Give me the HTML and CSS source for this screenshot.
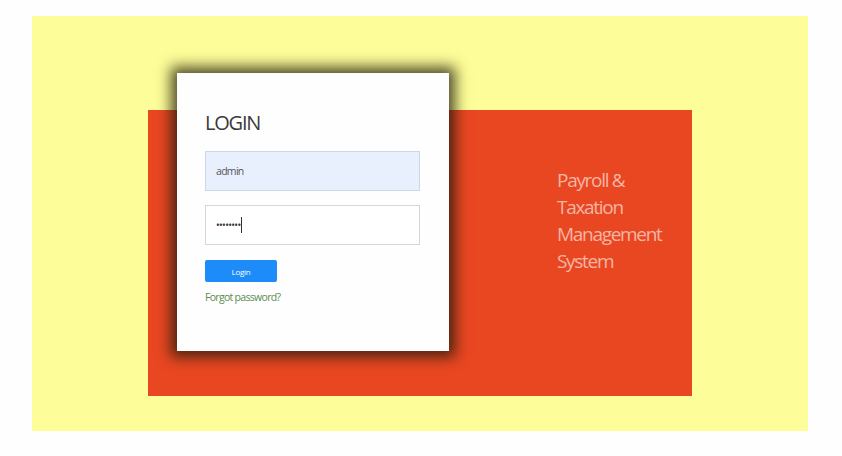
FILE: index.html
```html
<!DOCTYPE html>
<html lang="en">
<head>
<meta charset="utf-8">
<title>Login</title>
<link rel="stylesheet" href="styles.css">
</head>
<body>
<div class="frame">
  <div class="panel">
    <div class="card">
      <h1 class="title">LOGIN</h1>
      <div class="field filled">admin</div>
      <div class="field"><span class="dots">••••••••</span><span class="caret"></span></div>
      <button class="btn">Login</button>
      <a class="forgot" href="#">Forgot password?</a>
    </div>
    <div class="brand">
      <p>Payroll &amp;</p>
      <p>Taxation</p>
      <p>Management</p>
      <p>System</p>
    </div>
  </div>
</div>
</body>
</html>
```
FILE: styles.css
```css
html, body {
  margin: 0;
  padding: 0;
  background: #fefefe;
}
body {
  font-family: "Open Sans", "Noto Sans", sans-serif;
  padding: 16px 34px 25px 32px;
}
.frame {
  width: 776px;
  height: 415px;
  background: #fdfd99;
  padding: 94px 0 0 116px;
  box-sizing: border-box;
}
.panel {
  width: 544px;
  height: 286px;
  background: #e94722;
  display: flex;
  padding-left: 29px;
  box-sizing: border-box;
}
.card {
  width: 272px;
  height: 278px;
  margin-top: -37px;
  background: #fefefe;
  box-shadow: 0 0 13px 6px rgba(30, 25, 10, 0.78);
  box-sizing: border-box;
  padding: 37px 29px 0 28px;
  display: flex;
  flex-direction: column;
  align-items: flex-start;
}
.title {
  margin: 0;
  font-weight: 400;
  font-size: 20px;
  line-height: 26px;
  color: #3a3a3a;
  letter-spacing: -1.2px;
}
.field {
  width: 215px;
  height: 40px;
  box-sizing: border-box;
  border: 1px solid #d6d6d6;
  background: #fff;
  display: flex;
  align-items: center;
  padding-left: 10px;
  font-size: 10.5px;
  letter-spacing: -0.7px;
  color: #555;
  margin-top: 14px;
}
.field.filled {
  margin-top: 15px;
  background: #e8f0fe;
  border-color: #cfd7e4;
}
.dots {
  font-size: 10px;
  letter-spacing: -0.7px;
  color: #333;
}
.caret {
  display: inline-block;
  width: 1px;
  height: 16px;
  background: #333;
  margin-left: 1px;
}
.btn {
  margin-top: 15px;
  width: 72px;
  height: 22px;
  border: none;
  border-radius: 2px;
  background: #1d8cf8;
  color: #fff;
  font-family: inherit;
  font-size: 8px;
  letter-spacing: -0.3px;
  padding: 0;
}
.forgot {
  margin-top: 8px;
  font-size: 10.5px;
  color: #5b8c51;
  text-decoration: none;
  letter-spacing: -0.7px;
}
.brand {
  margin-left: 108px;
  padding-top: 57px;
  color: #f5b5a2;
  font-size: 19px;
  line-height: 27px;
  letter-spacing: -1.3px;
}
.brand p {
  margin: 0;
}
```
